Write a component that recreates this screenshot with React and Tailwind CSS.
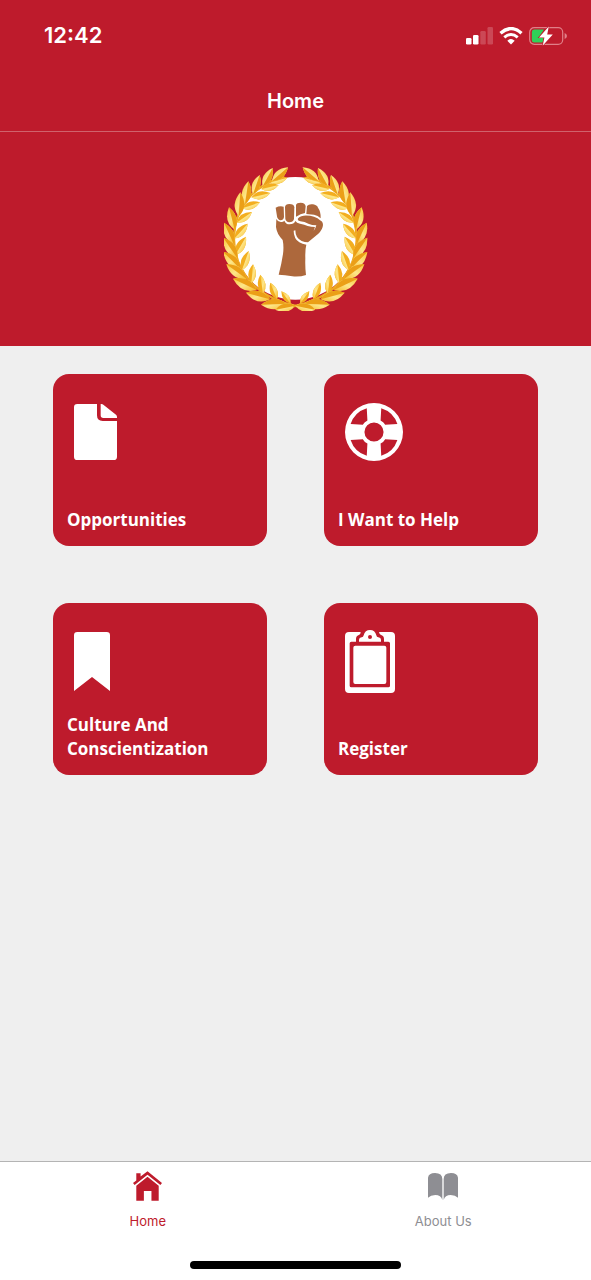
// App.jsx
import { useState } from "react";

// stem point and tip of every leaf on the left branch, top to bottom
const outerLeaves = [
  [170, 78, 218, 37],
  [142, 94, 172, 39],
  [113, 118, 133, 60],
  [89, 148, 99, 79],
  [70, 184, 75, 112],
  [58, 224, 41, 157],
  [55, 266, 26, 203],
  [66, 310, 24, 248],
  [77, 344, 24, 291],
  [94, 372, 33, 328],
  [124, 405, 53, 371],
  [164, 433, 92, 413],
  [214, 446, 137, 449],
  [240, 452, 180, 464],
];

const innerLeaves = [
  [165, 82, 216, 68],
  [138, 102, 190, 90],
  [108, 127, 165, 114],
  [80, 160, 134, 142],
  [64, 203, 110, 171],
  [58, 250, 97, 206],
  [60, 300, 92, 245],
  [80, 345, 100, 288],
  [108, 385, 113, 328],
  [143, 416, 135, 359],
  [185, 433, 165, 383],
  [226, 446, 198, 409],
];

function Leaf({ points, light, dark }) {
  const [x1, y1, x2, y2] = points;
  const dx = x2 - x1;
  const dy = y2 - y1;
  const mx = x1 + dx * 0.45;
  const my = y1 + dy * 0.45;
  const k = 0.4;
  const a = `${mx - dy * k} ${my + dx * k}`;
  const b = `${mx + dy * k} ${my - dx * k}`;

  return (
    <g>
      <path d={`M${x1} ${y1}Q${a} ${x2} ${y2}Q${b} ${x1} ${y1}Z`} fill={light} />
      <path
        d={`M${x1} ${y1}Q${a} ${x2} ${y2}Q${mx} ${my} ${x1} ${y1}Z`}
        fill={dark}
      />
    </g>
  );
}

function Branch() {
  return (
    <g>
      <path
        d="M173 76C90 114 56 180 56 255C59 340 110 425 246 454"
        fill="none"
        stroke="#eda722"
        strokeWidth="7"
      />
      {innerLeaves.map((p) => (
        <Leaf key={p.join()} points={p} light="#f3ae1f" dark="url(#leafLight)" />
      ))}
      {outerLeaves.map((p) => (
        <Leaf key={p.join()} points={p} light="url(#leafLight)" dark="#eb9f17" />
      ))}
    </g>
  );
}

function Emblem() {
  return (
    <svg
      viewBox="26 36 432 432"
      className="h-36 w-36"
      role="img"
      aria-label="Raised fist in a laurel wreath"
    >
      <defs>
        <linearGradient id="leafLight" x1="0" y1="0" x2="1" y2="1">
          <stop offset="0" stopColor="#f9c93c" />
          <stop offset="0.5" stopColor="#fde68a" />
          <stop offset="1" stopColor="#f7bb2c" />
        </linearGradient>
      </defs>
      <circle cx="240" cy="250" r="184" fill="#fff" />
      <Branch />
      <g transform="translate(480 0) scale(-1 1)">
        <Branch />
      </g>

      {/* fist */}
      <g fill="#ad683c">
        <path d="M181 158Q192 152 205 155L206 186Q204 196 196 196Q187 195 185 184Z" />
        <path d="M209 156Q210 147 222 147Q236 147 237 157L236 192Q233 202 222 202Q212 201 210 192Z" />
        <path d="M242 150Q244 143 256 143Q270 144 271 154L269 174Q254 176 245 184Q241 187 242 180Z" />
        <path d="M275 153Q281 146 293 148Q305 150 308 158Q317 170 316 190Q308 181 296 179L273 177Z" />
        <path d="M183 192Q188 202 198 201Q204 201 207 197Q211 208 223 208Q236 208 240 198Q244 204 254 206Q268 208 277 213Q288 216 299 216L295 228Q301 220 303 211Q290 211 279 206Q268 200 255 199Q247 198 247 192Q250 184 265 182Q282 181 296 185Q308 188 314 196Q323 200 323 210Q322 224 309 236L278 262Q268 262 259 258Q240 249 240 226L235 227Q235 251 252 262Q261 268 273 269Q269 284 270 310Q269 340 272 360Q254 366 231 364Q208 360 190 359Q199 325 203 297Q206 274 202 255Q184 236 182 216Z" />
      </g>
    </svg>
  );
}

function PageIcon() {
  return (
    <svg viewBox="102 116 129 168" className="h-14 w-[43px]" fill="currentColor">
      <path d="M112 116H171V150Q171 167 188 167H231V274Q231 284 221 284H112Q102 284 102 274V126Q102 116 112 116Z" />
      <path d="M182 116H184Q188 116 191 119L228 148Q231 151 231 155V158H190Q182 158 182 150Z" />
    </svg>
  );
}

function LifebuoyIcon() {
  return (
    <svg viewBox="-88 -88 176 176" className="h-[58px] w-[58px]" fill="currentColor">
      <path
        fillRule="evenodd"
        d="M-88 0A88 88 0 1 0 88 0A88 88 0 1 0 -88 0Z
          M-29 0A29 29 0 1 0 29 0A29 29 0 1 0 -29 0Z
          M-22 -72L-20 -35Q-30 -30 -34 -22L-71 -24A75 75 0 0 1 -22 -72Z
          M22 -72L20 -35Q30 -30 34 -22L71 -24A75 75 0 0 0 22 -72Z
          M-22 72L-20 35Q-30 30 -34 22L-71 24A75 75 0 0 0 -22 72Z
          M22 72L20 35Q30 30 34 22L71 24A75 75 0 0 1 22 72Z"
      />
    </svg>
  );
}

function BookmarkIcon() {
  return (
    <svg viewBox="102 108 108 177" className="h-[59px] w-9" fill="currentColor">
      <path d="M112 108H200Q210 108 210 118V285L156 243L102 285V118Q102 108 112 108Z" />
    </svg>
  );
}

function ClipboardIcon() {
  return (
    <svg viewBox="105 102 150 189" className="h-[63px] w-[50px]" fill="currentColor">
      <path
        fillRule="evenodd"
        d="M117 108H152Q152 114 148 116Q138 119 138 129V137H124Q119 137 119 142V269Q119 274 124 274H235Q240 274 240 269V142Q240 137 235 137H222V129Q222 119 212 116Q208 114 207 108H243Q255 108 255 120V279Q255 291 243 291H117Q105 291 105 279V120Q105 108 117 108Z"
      />
      <rect x="130" y="149" width="99" height="115" rx="6" />
      <path
        fillRule="evenodd"
        d="M147 137V131Q147 125 155 124Q160 124 161 118Q165 102 180 102Q195 102 199 118Q200 124 205 124Q213 125 213 131V137Z
          M174 123A6 6 0 1 0 186 123A6 6 0 1 0 174 123Z"
      />
    </svg>
  );
}

function HomeIcon() {
  return (
    <svg viewBox="38 32 88 90" className="h-[30px] w-[29px]" fill="currentColor">
      <path d="M48 60V38H61V48L82 32L126 68L121 74L82 43L43 74L38 68Z" />
      <path d="M82 49L116 76V122H94V92H71V122H48V76Z" />
    </svg>
  );
}

function BookIcon() {
  return (
    <svg viewBox="68 36 90 81" className="h-[27px] w-[30px]" fill="currentColor">
      <path d="M68 50Q70 36 89 36Q111 36 111 54V117Q107 102 90 102Q76 102 68 110Z" />
      <path d="M158 50Q156 36 137 36Q115 36 115 54V117Q119 102 136 102Q150 102 158 110Z" />
    </svg>
  );
}

function StatusIcons() {
  return (
    <div className="flex items-center gap-1.5">
      <svg viewBox="0 0 27 18" className="h-[18px] w-[27px]" fill="#fff">
        <rect x="0" y="11" width="5.5" height="6.5" rx="1.3" />
        <rect x="7" y="8" width="5.5" height="9.5" rx="1.3" />
        <rect x="14.3" y="4" width="5.5" height="13.5" rx="1.3" opacity="0.2" />
        <rect x="21.5" y="0" width="5.5" height="17.5" rx="1.3" opacity="0.2" />
      </svg>
      <svg viewBox="0 0 24 18" className="h-[18px] w-6" fill="none" stroke="#fff">
        <path d="M1.5 6.2Q12 -3 22.5 6.2" strokeWidth="3.4" />
        <path d="M5.3 10.3Q12 4.6 18.7 10.3" strokeWidth="3" />
        <path d="M8.3 13.7Q12 10.5 15.7 13.7L12 17.6Z" fill="#fff" stroke="none" />
      </svg>
      <svg viewBox="0 0 38 20" className="h-5 w-[38px]">
        <rect x="0.7" y="1.7" width="33" height="16.6" rx="4.5" fill="none" stroke="#e07f88" strokeWidth="1.2" />
        <path d="M35.6 7Q38 8 38 10Q38 12 35.6 13Z" fill="#e07f88" />
        <path d="M5 3.5H15L10 11H15L13.5 16.5H5Q2.8 16.5 2.8 14V6Q2.8 3.5 5 3.5Z" fill="#30d158" />
        <path
          d="M19.8 0.5L10 11.4H15.4L13.8 19.5L23.8 8.4H18.2Z"
          fill="#fff"
          stroke="#be1b2c"
          strokeWidth="1.2"
          paintOrder="stroke"
        />
      </svg>
    </div>
  );
}

const cards = [
  { id: 1, title: "Opportunities", icon: PageIcon },
  { id: 2, title: "I Want to Help", icon: LifebuoyIcon },
  { id: 3, title: "Culture And Conscientization", icon: BookmarkIcon },
  { id: 4, title: "Register", icon: ClipboardIcon },
];

const tabs = [
  { id: "home", label: "Home", icon: HomeIcon },
  { id: "about", label: "About Us", icon: BookIcon },
];

export default function App() {
  const [activeTab, setActiveTab] = useState("home");

  return (
    <div className="flex min-h-screen flex-col bg-[#efefef] font-['Inter',sans-serif]">
      <header className="border-b border-[#d0626c] bg-[#be1b2c] text-white">
        <div className="flex h-[71px] items-center justify-between pr-6 pl-11">
          <span className="text-[22px] font-semibold">12:42</span>
          <StatusIcons />
        </div>
        <h1 className="flex h-15 items-center justify-center text-xl font-semibold">
          Home
        </h1>
      </header>

      <div className="flex justify-center bg-[#be1b2c] py-[35px]">
        <Emblem />
      </div>

      <main className="grid flex-1 grid-cols-2 content-start gap-[57px] px-[53px] py-7">
        {cards.map(({ id, title, icon: Icon }) => (
          <button
            key={id}
            className="flex h-[172px] flex-col justify-between rounded-2xl bg-[#be1b2c] px-[14px] pt-[26px] pb-[14px] text-left text-white"
          >
            <span className="flex h-16 items-center px-[7px]">
              <Icon />
            </span>
            <span className="font-['Open_Sans',sans-serif] text-[17px] leading-6 font-bold">
              {title}
            </span>
          </button>
        ))}
      </main>

      {/* bottom tabs */}
      <footer className="border-t border-[#b4b4b4] bg-white">
        <nav className="grid grid-cols-2">
          {tabs.map(({ id, label, icon: Icon }) => (
            <button
              key={id}
              onClick={() => setActiveTab(id)}
              className={
                activeTab === id
                  ? "flex flex-col items-center gap-[9px] pt-2 text-[#be1b2c]"
                  : "flex flex-col items-center gap-[9px] pt-2 text-[#8e8e93]"
              }
            >
              <span className="flex h-8 items-center">
                <Icon />
              </span>
              <span className="text-[13px] leading-5">{label}</span>
            </button>
          ))}
        </nav>
        <div className="flex justify-center pt-[30px] pb-[11px]">
          <div className="h-2 w-[211px] rounded-full bg-black" />
        </div>
      </footer>
    </div>
  );
}
